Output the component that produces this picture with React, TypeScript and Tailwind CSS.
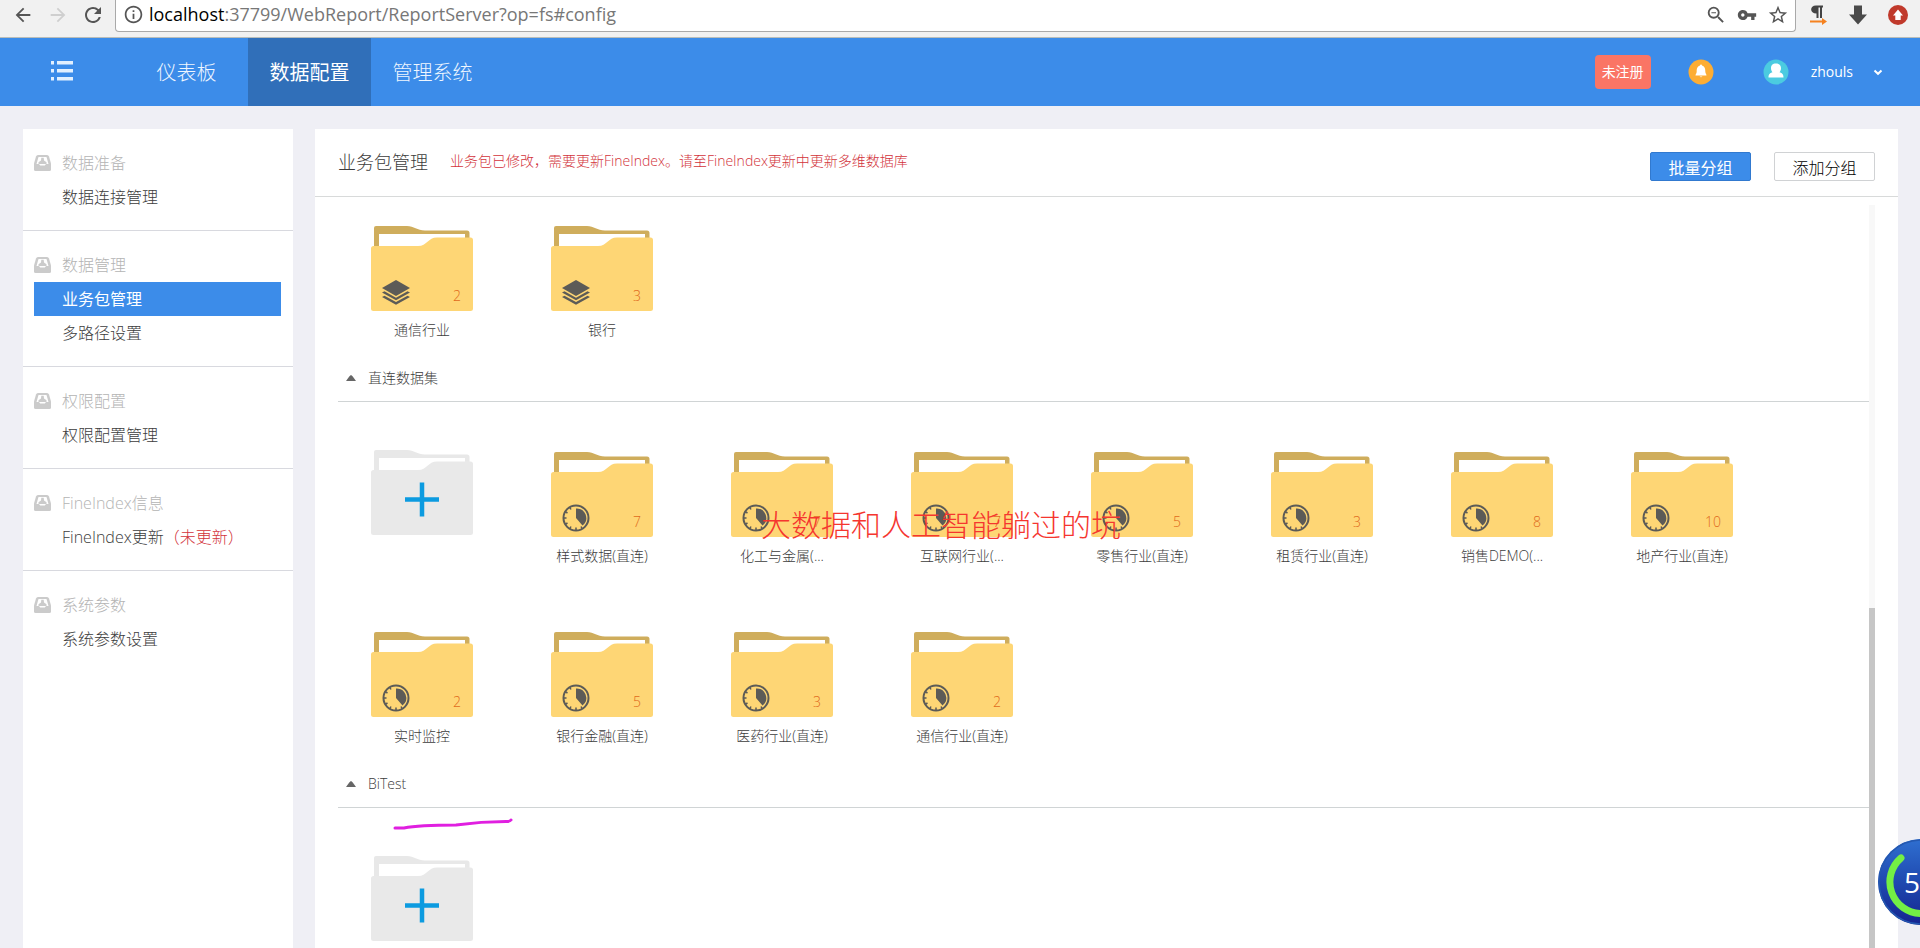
import React from "react";
import {
  MdArrowBack,
  MdArrowForward,
  MdInfoOutline,
  MdRefresh,
  MdStarBorder,
  MdVpnKey,
  MdZoomOut,
} from "react-icons/md";

type FolderKind = "layers" | "clock";
interface Pack {
  name: string;
  count: number;
  kind: FolderKind;
}

const topPacks: Pack[] = [
  { name: "通信行业", count: 2, kind: "layers" },
  { name: "银行", count: 3, kind: "layers" },
];

const directPacks: Pack[] = [
  { name: "样式数据(直连)", count: 7, kind: "clock" },
  { name: "化工与金属(...", count: 7, kind: "clock" },
  { name: "互联网行业(...", count: 7, kind: "clock" },
  { name: "零售行业(直连)", count: 5, kind: "clock" },
  { name: "租赁行业(直连)", count: 3, kind: "clock" },
  { name: "销售DEMO(...", count: 8, kind: "clock" },
  { name: "地产行业(直连)", count: 10, kind: "clock" },
  { name: "实时监控", count: 2, kind: "clock" },
  { name: "银行金融(直连)", count: 5, kind: "clock" },
  { name: "医药行业(直连)", count: 3, kind: "clock" },
  { name: "通信行业(直连)", count: 2, kind: "clock" },
];

const menu: { title: string; items: { label: string; note?: string; active?: boolean }[] }[] = [
  { title: "数据准备", items: [{ label: "数据连接管理" }] },
  { title: "数据管理", items: [{ label: "业务包管理", active: true }, { label: "多路径设置" }] },
  { title: "权限配置", items: [{ label: "权限配置管理" }] },
  { title: "FineIndex信息", items: [{ label: "FineIndex更新", note: "（未更新）" }] },
  { title: "系统参数", items: [{ label: "系统参数设置" }] },
];

function FolderShape({ back, front }: { back: string; front: string }) {
  return (
    <>
      <path
        d="M3 24V2Q3 0 5 0H36C43 0 46 4.500 54 4.500H96Q98.500 4.500 98.500 7V20H94V8H8V24Z"
        fill={back}
      />
      <path
        d="M0 22.500Q0 20 2.500 20H47C56 20 57 11.500 66 11.500H99.500Q102 11.500 102 14V82.500Q102 85 99.500 85H2.500Q0 85 0 82.500Z"
        fill={front}
      />
    </>
  );
}

function ClockMark() {
  return (
    <g stroke="#5c5b57" fill="none" strokeWidth="1.500">
      <circle cx="25" cy="66" r="12.500" strokeWidth="2" />
      <path d="M25 56.500A9.500 9.500 0 0 1 31.500 73.500L25 66Z" fill="#5c5b57" stroke="none" />
      <path d="M25 78V75.500M12.500 66H15.500M18.700 55.200L20 57.500M14 59.500L16.500 61M14 72.500L16.500 71M18.700 76.800L20 74.500M31.300 76.800L30 74.500" />
    </g>
  );
}

function LayersMark() {
  return (
    <g fill="#5c5b57">
      <path d="M25 54L39 62L25 70L11 62Z" />
      <path d="M11 66.500L13.500 65.200L25 71.700L36.500 65.200L39 66.500L25 74.300Z" />
      <path d="M11 71L13.500 69.700L25 76L36.500 69.700L39 71L25 78.700Z" />
    </g>
  );
}

function PackCell({ pack }: { pack: Pack }) {
  return (
    <a href="#pack" className="relative block w-[102px]">
      <svg viewBox="0 0 102 85" className="block h-[85px] w-full" aria-hidden="true">
        <FolderShape back="#cfad5c" front="#fed675" />
        {pack.kind === "clock" ? <ClockMark /> : <LayersMark />}
      </svg>
      <span className="absolute top-[60px] right-3 text-sm leading-5 text-[#e06a1c]">{pack.count}</span>
      <span className="mt-[9px] block text-center text-sm leading-5 whitespace-nowrap">{pack.name}</span>
    </a>
  );
}

function AddCell() {
  return (
    <button type="button" aria-label="添加业务包" className="block h-[114px] w-[102px]">
      <svg viewBox="0 0 102 114" className="block h-full w-full overflow-visible" aria-hidden="true">
        <g transform="translate(0 -2)">
          <FolderShape back="#e8e8e8" front="#e9e9e9" />
        </g>
        <path d="M51 30.500V64.500M34 47.500H68" stroke="#0c9be0" strokeWidth="4.500" />
      </svg>
    </button>
  );
}

function GroupHeader({ title }: { title: string }) {
  return (
    <h2 className="flex items-center gap-3 border-b border-[#d0d4d5] pt-7 pb-[13px] pl-2 text-sm leading-5 font-light">
      <svg viewBox="0 0 10 6" className="h-1.5 w-2.5" aria-hidden="true">
        <path d="M5 0Q6 0 10 6H0Q4 0 5 0Z" fill="#666" />
      </svg>
      {title}
    </h2>
  );
}

function Tray() {
  return (
    <svg viewBox="0 0 17 16" className="h-4 w-[17px]" aria-hidden="true">
      <path
        fill="#cbcbcb"
        d="M4 0H13Q14.500 0 15 1.500L17 8.500V14.500Q17 16 15.500 16H1.500Q0 16 0 14.500V8.500L2 1.500Q2.500 0 4 0Z"
      />
      <path d="M4.500 2H12.500L14.500 9H12L10.800 10.500H6.200L5 9H2.500Z" fill="#fff" />
      <path d="M7.300 2.800H9.700L10 5.500L12.500 7.200V9H4.500V7.200L7 5.500Z" fill="#cbcbcb" />
    </svg>
  );
}

function BrowserBar() {
  return (
    <div className="flex h-[38px] shrink-0 items-start border-b border-[#b9bdb9] bg-[#f1f1f1] text-[#555]">
      <div className="flex h-[30px] w-[115px] items-center justify-between pr-2.5 pl-3">
        <button type="button" aria-label="Back"><MdArrowBack size={22} /></button>
        <button type="button" aria-label="Forward" className="text-[#cfcfcf]"><MdArrowForward size={22} /></button>
        <button type="button" aria-label="Reload"><MdRefresh size={24} /></button>
      </div>
      <div className="flex h-8 flex-1 items-center gap-[5px] rounded-b-sm border border-t-0 border-[#a9a9a9] bg-white pr-1.5 pb-0.5 pl-[7px]">
        <MdInfoOutline size={21} />
        <p className="flex-1 pb-0.5 text-lg leading-6 text-[#777]">
          <span className="text-black">localhost</span>:37799/WebReport/ReportServer?op=fs#config
        </p>
        <div className="flex items-center gap-2.5">
          <MdZoomOut size={22} />
          <MdVpnKey size={20} />
          <MdStarBorder size={22} />
        </div>
      </div>
      <div className="flex h-[30px] items-center gap-5 pr-3 pl-3">
        <svg viewBox="0 0 20 20" className="size-5" aria-hidden="true">
          <path d="M8 0.500H15V2.500H14V13H12V2.500H10.500V13H8.500V8.500C1.500 8.500 1.500 0.500 8 0.500Z" fill="#444" />
          <path d="M2 15.500H14V13L19 16.500L14 20V17.500H2Z" fill="#f58220" />
        </svg>
        <svg viewBox="0 0 20 20" className="size-5" aria-hidden="true">
          <path d="M6 0.500H14V9.500H19L10 19.500L1 9.500H6Z" fill="#4a4a4a" />
        </svg>
        <svg viewBox="0 0 20 20" className="size-5" aria-hidden="true">
          <circle cx="10" cy="10" r="10" fill="#c0392b" />
          <path d="M10 4.500L15 10.500H12.700V15H7.300V10.500H5Z" fill="#fff" />
        </svg>
      </div>
    </div>
  );
}

function AppHeader() {
  const tab = "flex w-[123px] items-center justify-center pt-0.5 text-xl";
  return (
    <header className="flex h-[68px] shrink-0 items-stretch bg-[#3c8ce9] text-white">
      <button type="button" aria-label="菜单" className="flex w-[125px] items-center pb-0.5 pl-[50px]">
        <svg viewBox="0 0 24 20" className="h-5 w-6" fill="#e2f0ff" aria-hidden="true">
          <path d="M1 0H4V3.500H1ZM7 0H23V3.500H7ZM1 8H4V11.500H1ZM7 8H23V11.500H7ZM1 16H4V19.500H1ZM7 16H23V19.500H7Z" />
        </svg>
      </button>
      <nav className="flex flex-1">
        <a href="#dashboard" className={tab + " font-light text-[#eef6ff]"}>仪表板</a>
        <a href="#config" className={tab + " bg-[#306fb9]"}>数据配置</a>
        <a href="#admin" className={tab + " font-light text-[#eef6ff]"}>管理系统</a>
      </nav>
      <div className="flex items-center pr-[37px] text-sm">
        <a href="#register" className="flex h-[34px] w-14 items-center justify-center rounded bg-[#fa7565]">未注册</a>
        <button type="button" aria-label="消息" className="ml-[37px]">
          <svg viewBox="0 0 26 26" className="size-[26px]">
            <circle cx="13" cy="13" r="12.500" fill="#fdad33" />
            <path d="M13 5.500Q14 5.500 14 6.500C17 7.500 17.300 10 17.300 12.500C17.300 14.500 18.500 15 18.500 16.500H7.500C7.500 15 8.700 14.500 8.700 12.500C8.700 10 9 7.500 12 6.500Q12 5.500 13 5.500ZM11.500 17.500H14.500Q13 19 11.500 17.500Z" fill="#fff" />
          </svg>
        </button>
        <svg viewBox="0 0 26 26" className="ml-[49px] size-[26px]" aria-hidden="true">
          <circle cx="13" cy="13" r="12.500" fill="#4bcbe0" />
          <path d="M13 4.500C16.500 4.500 18 6.500 18 9.200C18 11.500 17 12.500 16.500 13.200C19 14 20.500 15 20.500 18.500H5.500C5.500 15 7 14 9.500 13.200C9 12.500 8 11.500 8 9.200C8 6.500 9.500 4.500 13 4.500Z" fill="#fff" />
        </svg>
        <button type="button" className="ml-[22px] flex items-center gap-5">
          <span>zhouls</span>
          <svg viewBox="0 0 10 8" className="h-2 w-2.5" aria-hidden="true">
            <path d="M1.500 2.500L5 5.800L8.500 2.500" fill="none" stroke="#fff" strokeWidth="2" />
          </svg>
        </button>
      </div>
    </header>
  );
}

function Sidebar() {
  return (
    <aside className="w-[270px] shrink-0 bg-white">
      {menu.map((group) => (
        <section key={group.title} className="border-b border-[#d8d9df] pt-[17px] pr-3 pb-4 pl-[11px] last:border-b-0">
          <h2 className="flex h-[34px] items-center gap-[11px] font-light text-[#b4b4b4]">
            <Tray />
            {group.title}
          </h2>
          <ul>
            {group.items.map((item) => (
              <li key={item.label}>
                <a
                  href="#item"
                  className={
                    item.active
                      ? "flex h-[34px] items-center bg-[#3c8ce9] pl-7 font-normal text-white"
                      : "flex h-[34px] items-center pl-7"
                  }
                >
                  {item.label}
                  {item.note && <span className="text-[#d2333b]">{item.note}</span>}
                </a>
              </li>
            ))}
          </ul>
        </section>
      ))}
    </aside>
  );
}

export default function App() {
  return (
    <div className="relative flex h-screen flex-col overflow-hidden bg-[#efeff5] font-['Open_Sans','Noto_Sans_CJK_SC',sans-serif] text-[#3c3c3c]">
      <BrowserBar />
      <AppHeader />
      <div className="flex min-h-0 flex-1 gap-[22px] pt-[23px] pr-[22px] pl-[23px] font-light">
        <Sidebar />
        <main className="flex min-w-0 flex-1 flex-col bg-white">
          <div className="flex h-[68px] shrink-0 items-center border-b border-[#d8dada] pr-[23px] pb-0.5 pl-[23px]">
            <h1 className="text-lg font-light">业务包管理</h1>
            <p className="flex-1 pb-0.5 pl-[22px] text-sm text-[#d2333b]">
              业务包已修改，需要更新FineIndex。请至FineIndex更新中更新多维数据库
            </p>
            <div className="flex gap-[23px] pt-2.5 leading-none">
              <button type="button" className="h-[29px] w-[101px] rounded-xs border border-[#3179cf] bg-[#3c8ce9] pt-[3px] font-normal text-white">批量分组</button>
              <button type="button" className="h-[29px] w-[101px] rounded-xs border border-[#d0d2d4] bg-white pt-[3px] text-black">添加分组</button>
            </div>
          </div>
          <div className="flex min-h-0 flex-1 pt-2 pr-[23px] pl-[23px]">
            <div className="min-w-0 flex-1 overflow-hidden">
              <div className="flex flex-wrap gap-x-[78px] gap-y-[66px] pt-[21px] pl-[33px]">
                {topPacks.map((p) => (
                  <PackCell key={p.name} pack={p} />
                ))}
              </div>
              <GroupHeader title="直连数据集" />
              <div className="flex flex-wrap gap-x-[78px] gap-y-[66px] pt-[50px] pl-[33px]">
                <AddCell />
                {directPacks.map((p) => (
                  <PackCell key={p.name} pack={p} />
                ))}
              </div>
              <GroupHeader title="BiTest" />
              <div className="flex flex-wrap pt-[50px] pl-[33px]">
                <AddCell />
              </div>
            </div>
            <div className="flex w-1.5 flex-col bg-[#f8f8f8]">
              <div className="mt-auto h-[340px] bg-[#c6c6c6]" />
            </div>
          </div>
        </main>
      </div>

      <p className="pointer-events-none absolute top-[506px] left-[761px] font-['Liberation_Serif','Noto_Sans_CJK_SC',serif] text-3xl leading-10 font-light whitespace-nowrap text-[#f5362f]">
        大数据和人工智能躺过的坑
      </p>
      <svg viewBox="0 0 122 14" className="pointer-events-none absolute top-[817px] left-[392px] h-3.5 w-[122px]" aria-hidden="true">
        <path d="M3 11H12C24 8.500 40 8 64 8C82 5.500 96 4.500 114 4.500Q118 4.500 119 3" fill="none" stroke="#e01fe0" strokeWidth="3" strokeLinecap="round" />
      </svg>
      <div className="absolute top-[838px] right-0 h-[88px] w-11 overflow-hidden">
        <svg viewBox="0 0 44 88" className="h-[88px] w-11" aria-hidden="true">
          <defs>
            <linearGradient id="ball" x1="0" y1="0" x2="0" y2="1">
              <stop offset="0" stopColor="#2f6fd0" />
              <stop offset="0.5" stopColor="#1f49b0" />
              <stop offset="1" stopColor="#15248f" />
            </linearGradient>
          </defs>
          <circle cx="45" cy="44" r="43" fill="url(#ball)" />
          <circle cx="45" cy="44" r="42" fill="none" stroke="#2458b0" strokeWidth="1.500" />
          <path d="M25 20A31.500 31.500 0 0 0 45 75.500" fill="none" stroke="#73ef45" strokeWidth="7" strokeLinecap="round" />
        </svg>
        <span className="absolute top-7 left-7 text-[28px] leading-8 text-white">5</span>
      </div>
    </div>
  );
}
